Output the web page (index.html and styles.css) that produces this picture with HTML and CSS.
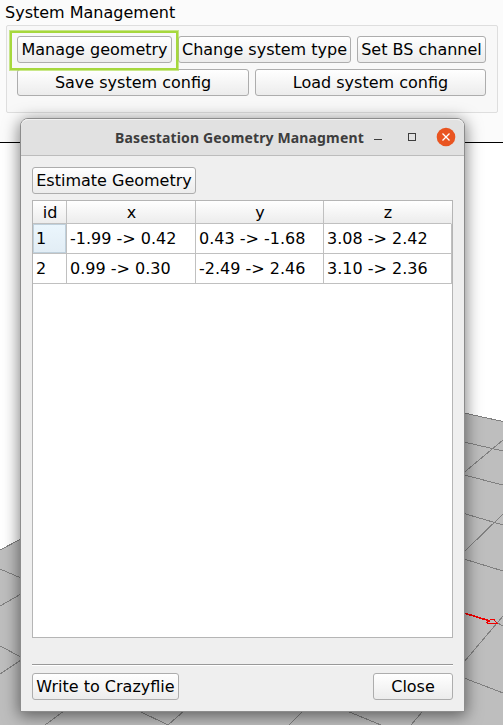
FILE: index.html
```html
<!DOCTYPE html>
<html lang="en">
<head>
<meta charset="utf-8">
<title>System Management</title>
<link rel="stylesheet" href="styles.css">
</head>
<body>
<main class="app">
  <section class="panel">
    <h1 class="panel-title">System Management</h1>
    <div class="group">
      <div class="row">
        <button class="btn manage highlighted">Manage geometry</button>
        <button class="btn change">Change system type</button>
        <button class="btn channel">Set BS channel</button>
      </div>
      <div class="row">
        <button class="btn save">Save system config</button>
        <button class="btn load">Load system config</button>
      </div>
    </div>
  </section>
  <svg class="scene" viewBox="0 143 503 582" shape-rendering="crispEdges">
    <path fill="#bebebe" d="M0 550L21 539L464 413L503 422V725H0Z"/>
    <path class="grid" d="M0 550L21 539M0 569L21 578M0 606L21 594M0 646L21 657M0 674L21 660M464 413L503 421.500M464 442L503 451M464 472.500L503 440M464 475L503 485M464 513.500L503 525M464 552L503 514M464 559L503 571M464 662L503 616M464 678L503 693M496 622L503 626M64 711L45 725M139 711L168 725L184 711M303 711L289 725M347 711L381 725M423 711L411 725"/>
    <path class="axis-line" d="M464 613L490 621"/>
    <path class="axis-tip" d="M487 622.500L491 619.500H494L497 623.500H488Z"/>
  </svg>
  <section class="dialog">
    <header class="titlebar">
      <h2 class="title">Basestation Geometry Managment</h2>
      <svg class="controls" width="90" height="36" viewBox="0 0 90 36">
        <path d="M0 20.500H8" stroke="#3d3d3d"/>
        <rect x="34.500" y="14.500" width="7" height="7" fill="none" stroke="#3d3d3d"/>
        <circle cx="72" cy="18" r="9.300" fill="#e95420"/>
        <path d="M68.500 14.500L75.500 21.500M75.500 14.500L68.500 21.500" stroke="#fff" stroke-width="1.300"/>
      </svg>
    </header>
    <div class="content">
      <button class="btn estimate">Estimate Geometry</button>
      <div class="table-frame">
        <table>
          <colgroup><col class="col-id"><col class="col-x"><col class="col-y"><col class="col-z"></colgroup>
          <thead><tr><th>id</th><th>x</th><th>y</th><th>z</th></tr></thead>
          <tbody>
            <tr><td class="selected">1</td><td>-1.99 -&gt; 0.42</td><td>0.43 -&gt; -1.68</td><td>3.08 -&gt; 2.42</td></tr>
            <tr><td>2</td><td>0.99 -&gt; 0.30</td><td>-2.49 -&gt; 2.46</td><td>3.10 -&gt; 2.36</td></tr>
          </tbody>
        </table>
      </div>
      <footer class="actions">
        <button class="btn write">Write to Crazyflie</button>
        <button class="btn close">Close</button>
      </footer>
    </div>
  </section>
</main>
</body>
</html>
```
FILE: styles.css
```css
* { box-sizing: border-box; }
body { margin: 0; }
h1, h2 { margin: 0; font-weight: normal; }

.app {
  position: relative;
  width: 503px;
  height: 725px;
  overflow: hidden;
  background: #fff;
  font: 16px/20px "DejaVu Sans", sans-serif;
  color: #000;
}

.panel {
  height: 143px;
  padding: 3px 5px 0 6px;
  background: #fbfbfb;
  border-bottom: 1px solid #000;
}
.panel-title { height: 22px; margin-left: -1px; font-size: 16px; }
.group {
  height: 88px;
  padding: 10px;
  border: 1px solid #dedede;
  border-radius: 2px;
  background: #f8f8f8;
  display: flex;
  flex-direction: column;
  gap: 6px;
}
.row { display: flex; gap: 6px; }

.btn {
  height: 27px;
  padding: 0;
  border: 1px solid #adadad;
  border-radius: 3px;
  background: linear-gradient(#fff, #ececec);
  font: inherit;
  color: inherit;
  white-space: nowrap;
}
.manage { width: 155px; }
.change { width: 173px; }
.channel { width: 129px; }
.save { width: 232px; }
.load { width: 231px; }

.highlighted { position: relative; }
.highlighted::after {
  content: "";
  position: absolute;
  inset: -6px -7px -8px -8px;
  border: 2px solid #a6d83d;
  box-shadow: 0 0 0 1px rgba(166, 216, 61, .6);
}

.scene { display: block; width: 503px; height: 582px; }
.grid { fill: none; stroke: #808080; }
.axis-line { stroke: #f00000; stroke-width: 1.6; }
.axis-tip { fill: none; stroke: #f00000; }

.dialog {
  position: absolute;
  left: 20px;
  top: 118px;
  width: 445px;
  height: 594px;
  border: 1px solid #8c8c8c;
  border-radius: 8px 8px 0 0;
  background: #efefef;
  box-shadow: 0 3px 16px 1px rgba(0, 0, 0, .5);
}
.titlebar {
  display: flex;
  height: 37px;
  padding-left: 94px;
  border-bottom: 1px solid #bcbcbc;
  border-radius: 7px 7px 0 0;
  background: #e1e1e1;
  box-shadow: inset 0 1px #f2f2f2;
}
.title {
  flex: none;
  width: 259px;
  font: bold 14px/38px "Noto Sans", sans-serif;
  letter-spacing: .14px;
  color: #3d3d3d;
  white-space: nowrap;
}
.controls { flex: none; }
.content { padding: 11px; display: flex; flex-direction: column; }
.estimate { width: 164px; }

.table-frame {
  height: 438px;
  margin-top: 6px;
  border: 1px solid #b5b5b5;
  background: #fff;
}
table { width: 419px; table-layout: fixed; border-collapse: separate; border-spacing: 0; }
.col-id { width: 34px; }
.col-x { width: 129px; }
.col-y { width: 128px; }
.col-z { width: 128px; }
th, td { border: solid #c0c0c0; border-width: 0 1px 1px 0; }
th {
  height: 23px;
  padding: 2px 0 0 1px;
  background: linear-gradient(#fff, #ececec);
  font-weight: normal;
}
td { height: 30px; padding: 0 3px; white-space: nowrap; }
th:last-child { border-right-color: transparent; }
.selected { background: linear-gradient(#ebf6fd, #e2edf5); box-shadow: inset 0 0 0 1px #bfd0dc; }

.actions {
  display: flex;
  justify-content: space-between;
  margin-top: 26px;
  padding-top: 7px;
  border-top: 1px solid #999;
  box-shadow: inset 0 1px #fff;
}
.write { width: 147px; margin-top: 1px; }
.close { width: 80px; margin-top: 1px; }
```
